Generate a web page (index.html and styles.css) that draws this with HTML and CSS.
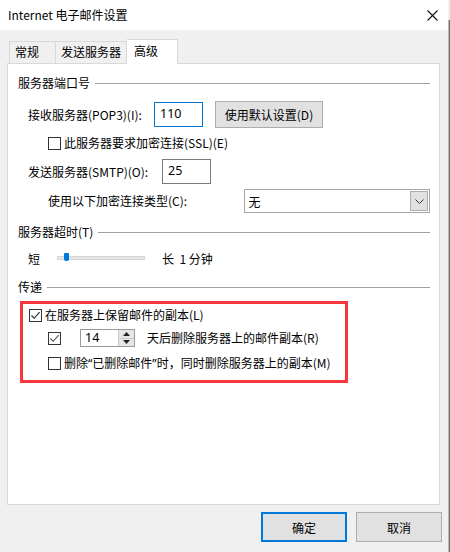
FILE: index.html
```html
<!DOCTYPE html>
<html lang="zh-CN">
<head>
    <meta charset="UTF-8">
    <title>Internet 电子邮件设置</title>
    <link rel="stylesheet" href="styles.css">
</head>
<body>
    <div class="screen">
        <div class="window">
            <div class="titlebar">
                <span class="title">Internet 电子邮件设置</span>
                <svg class="close" width="11" height="11" viewBox="0 0 11 11"><path d="M0.5 0.5 L10.5 10.5 M10.5 0.5 L0.5 10.5" stroke="#111" stroke-width="1.1" fill="none"/></svg>
            </div>
            <div class="body">
                <div class="tabs">
                    <div class="tab first">常规</div>
                    <div class="tab">发送服务器</div>
                    <div class="tab active">高级</div>
                </div>
                <div class="panel">
                    <div class="group-head h-ports"><span>服务器端口号</span><i></i></div>

                    <div class="row r-pop">
                        <label class="lbl w-pop">接收服务器(POP3)(I):</label>
                        <div class="field focus">110</div>
                        <div class="btn btn-default">使用默认设置(D)</div>
                    </div>

                    <div class="row r-ssl">
                        <span class="check"></span>
                        <span class="txt">此服务器要求加密连接(SSL)(E)</span>
                    </div>

                    <div class="row r-smtp">
                        <label class="lbl w-smtp">发送服务器(SMTP)(O):</label>
                        <div class="field">25</div>
                    </div>

                    <div class="row r-enc">
                        <label class="lbl w-enc">使用以下加密连接类型(C):</label>
                        <div class="select">
                            <span>无</span>
                            <span class="drop">
                                <svg width="9" height="5" viewBox="0 0 9 5"><path d="M0.5 0.5 L4.5 4.5 L8.5 0.5" stroke="#333" stroke-width="1" fill="none"/></svg>
                            </span>
                        </div>
                    </div>

                    <div class="group-head h-timeout"><span>服务器超时(T)</span><i></i></div>

                    <div class="row r-slider">
                        <span class="short">短</span>
                        <div class="track"><span class="thumb"></span></div>
                        <span class="long">长&nbsp;&nbsp;1 分钟</span>
                    </div>

                    <div class="group-head h-deliver"><span>传递</span><i></i></div>

                    <div class="highlight">
                        <div class="row r-keep">
                            <span class="check checked">
                                <svg width="11" height="11" viewBox="0 0 11 11"><path d="M1.5 5.5 L4.2 8.3 L9.6 2.2" stroke="#222" stroke-width="1.1" fill="none"/></svg>
                            </span>
                            <span class="txt">在服务器上保留邮件的副本(L)</span>
                        </div>
                        <div class="row r-days">
                            <span class="check checked">
                                <svg width="11" height="11" viewBox="0 0 11 11"><path d="M1.5 5.5 L4.2 8.3 L9.6 2.2" stroke="#555" stroke-width="1.1" fill="none"/></svg>
                            </span>
                            <div class="spin">
                                <span class="spin-val">14</span>
                                <span class="spin-btns">
                                    <span class="up"><svg width="7" height="4" viewBox="0 0 7 4"><path d="M3.5 0 L7 4 L0 4 Z" fill="#222"/></svg></span>
                                    <span class="down"><svg width="7" height="4" viewBox="0 0 7 4"><path d="M0 0 L7 0 L3.5 4 Z" fill="#222"/></svg></span>
                                </span>
                            </div>
                            <span class="txt days-txt">天后删除服务器上的邮件副本(R)</span>
                        </div>
                        <div class="row r-del">
                            <span class="check"></span>
                            <span class="txt">删除<span class="q">“</span>已删除邮件<span class="q">”</span>时，同时删除服务器上的副本(M)</span>
                        </div>
                    </div>
                </div>
                <div class="footer">
                    <div class="btn btn-ok">确定</div>
                    <div class="btn btn-cancel">取消</div>
                </div>
            </div>
        </div>
        <div class="edge"></div>
    </div>
</body>
</html>
```

FILE: styles.css
```css
* { box-sizing: border-box; }
html, body { margin: 0; padding: 0; }
body { font-family: "Noto Sans CJK SC", "Noto Sans", sans-serif; font-size: 12px; color: #000; background: #f0f0f0; white-space: nowrap; }

.screen { display: flex; width: 450px; height: 552px; overflow: hidden; }
.window { width: 448px; height: 552px; background: #f0f0f0; display: flex; flex-direction: column; }
.edge { width: 2px; margin-top: 20px; background: #6f6f6f; border-left: 1px solid #b9b9b9; }

.titlebar { height: 30px; background: #fff; display: flex; align-items: center; padding: 0 10px 0 8px; }
.title { flex: 1; font-size: 12px; line-height: 14px; }
.close { display: block; }

.body { padding: 9px 0 0 7px; }

.tabs { display: flex; align-items: flex-end; height: 24px; padding-left: 2px; }
.tab { height: 22px; line-height: 20px; padding: 0 5px; border: 1px solid #d9d9d9; border-bottom: none; border-left: none; background: #f0f0f0; }
.tab.first { border-left: 1px solid #d9d9d9; width: 47px; }
.tab:nth-child(2) { width: 71px; }
.tab.active { height: 25px; width: 51px; background: #fff; line-height: 21px; margin-bottom: -1px; position: relative; z-index: 1; padding-left: 7px; }

.panel { width: 433px; height: 442px; background: #fff; border: 1px solid #d9d9d9; padding: 0 9px 0 10px; display: flex; flex-direction: column; }

.group-head { display: flex; align-items: center; height: 16px; line-height: 16px; }
.group-head i { flex: 1; height: 1px; background: #a0a0a0; margin-left: 5px; }
.h-ports { margin-top: 11px; }
.h-timeout { margin-top: 11px; }
.h-deliver { margin-top: 13px; }

.row { display: flex; align-items: center; }
.lbl { display: block; line-height: 16px; }
.txt { line-height: 16px; }
.q { font-family: "Noto Sans", sans-serif; }

.r-pop { height: 27px; margin-top: 10px; padding-left: 10px; }
.w-pop { width: 126px; }
.field { width: 49px; height: 25px; border: 1px solid #7a7a7a; padding: 0 0 0 5px; line-height: 22px; font-family: "Noto Sans", sans-serif; font-size: 12.5px; }
.field.focus { border-color: #0078d7; }
.btn { display: flex; align-items: center; justify-content: center; background: #e1e1e1; border: 1px solid #adadad; }
.btn-default { width: 108px; height: 27px; margin-left: 12px; }

.r-ssl { height: 16px; margin-top: 7px; padding-left: 30px; }
.check { width: 13px; height: 13px; border: 1px solid #333; background: #fff; display: inline-flex; align-items: center; justify-content: center; margin-right: 3px; flex: none; }
.check.checked { border-color: #333; }

.r-smtp { height: 25px; margin-top: 8px; padding-left: 10px; }
.w-smtp { width: 134px; }

.r-enc { height: 24px; margin-top: 5px; padding-left: 30px; }
.w-enc { width: 197px; }
.select { width: 186px; height: 24px; border: 1px solid #a6a6a6; display: flex; align-items: center; justify-content: space-between; padding: 1px 1px 1px 3px; }
.drop { width: 18px; height: 20px; background: #e1e1e1; border: 1px solid #adadad; display: flex; align-items: center; justify-content: center; }
.drop svg { display: block; }

.r-slider { height: 16px; margin-top: 10px; padding-left: 10px; }
.short { width: 29px; }
.track { width: 88px; height: 4px; background: #e7e7e7; border: 1px solid #d6d6d6; position: relative; }
.thumb { position: absolute; left: 6px; top: -4px; width: 5px; height: 8px; background: #0078d7; border-radius: 1px 1px 2px 2px; }
.long { margin-left: 17px; }

.highlight { margin-top: 6px; margin-left: 2px; width: 328px; height: 82px; border: 3px solid #f4383d; padding-left: 6px; }
.r-keep { height: 16px; margin-top: 3px; }
.r-days { height: 18px; margin-top: 6px; padding-left: 19px; }
.spin { margin-left: 16px; width: 55px; height: 18px; border: 1px solid #9a9a9a; display: flex; }
.spin-val { flex: 1; padding-left: 4px; line-height: 16px; font-family: "Noto Sans", sans-serif; font-size: 12.5px; }
.spin-btns { width: 16px; display: flex; flex-direction: column; border-left: 1px solid #c8c8c8; background: #e6e6e6; }
.spin-btns span { flex: 1; display: flex; align-items: center; justify-content: center; }
.spin-btns .up { border-bottom: 1px solid #c8c8c8; }
.spin-btns svg { display: block; }
.days-txt { margin-left: 12px; }
.r-del { height: 16px; margin-top: 8px; padding-left: 19px; }

.footer { display: flex; justify-content: flex-end; padding-top: 7px; padding-right: 6px; gap: 9px; }
.btn-ok { width: 86px; height: 30px; border: 2px solid #0078d7; }
.btn-cancel { width: 86px; height: 30px; }
```
